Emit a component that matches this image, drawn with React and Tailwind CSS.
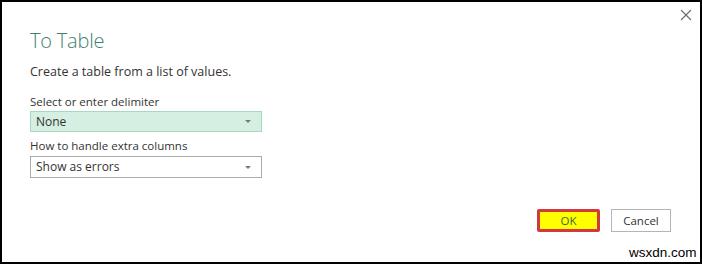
export default function App() {
  return (
    <div className="relative w-[702px] h-[264px] border-2 border-black bg-white overflow-hidden" style={{ fontFamily: '"Open Sans", "Noto Sans", sans-serif' }}>
      <div className="absolute left-[678px] top-[7px] w-[12px] h-[12px]">
        <svg width="12" height="12" viewBox="0 0 12 12">
          <path d="M1 1 L11 11 M11 1 L1 11" stroke="#6b6b6b" strokeWidth="1.1" fill="none" />
        </svg>
      </div>
      <div className="flex flex-col pl-[28px] pt-[26px]">
        <div className="text-[20px] leading-[26px] font-light text-[#3f7f70] tracking-[-0.2px]">To Table</div>
        <div className="mt-[9px] text-[12.5px] leading-[18px] text-[#333333]">Create a table from a list of values.</div>
        <div className="mt-[13px] text-[11.5px] leading-[16px] text-[#333333]">Select or enter delimiter</div>
        <div className="mt-[1px] w-[232px] h-[21px] border border-[#a8d8bf] bg-[#d5efe2] flex items-center justify-between pl-[5px] pr-[10px]">
          <span className="text-[12px] text-[#333333]">None</span>
          <svg width="6" height="3" viewBox="0 0 6 3"><path d="M0 0 H6 L3 3 Z" fill="#7a7a7a" /></svg>
        </div>
        <div className="mt-[6px] text-[11.5px] leading-[16px] text-[#333333]">How to handle extra columns</div>
        <div className="mt-[2px] w-[232px] h-[22px] border border-[#ababab] bg-white flex items-center justify-between pl-[5px] pr-[10px]">
          <span className="text-[12px] text-[#333333]">Show as errors</span>
          <svg width="6" height="3" viewBox="0 0 6 3"><path d="M0 0 H6 L3 3 Z" fill="#7a7a7a" /></svg>
        </div>
      </div>
      <div className="absolute left-[535px] top-[207px] flex gap-[11px]">
        <div className="w-[63px] h-[23px] border-[3px] border-[#d2393d] rounded-[2px] bg-[#ffff00] flex items-center justify-center text-[11.5px] text-[#3c6b3a]">OK</div>
        <div className="w-[60px] h-[23px] border border-[#b4b4b4] bg-white flex items-center justify-center text-[11.5px] text-[#333333]">Cancel</div>
      </div>
      <div className="absolute left-[627px] top-[242px] text-[13.5px] leading-[18px] text-black" style={{ fontFamily: '"Liberation Sans", Arial, sans-serif' }}>wsxdn.com</div>
    </div>
  );
}
